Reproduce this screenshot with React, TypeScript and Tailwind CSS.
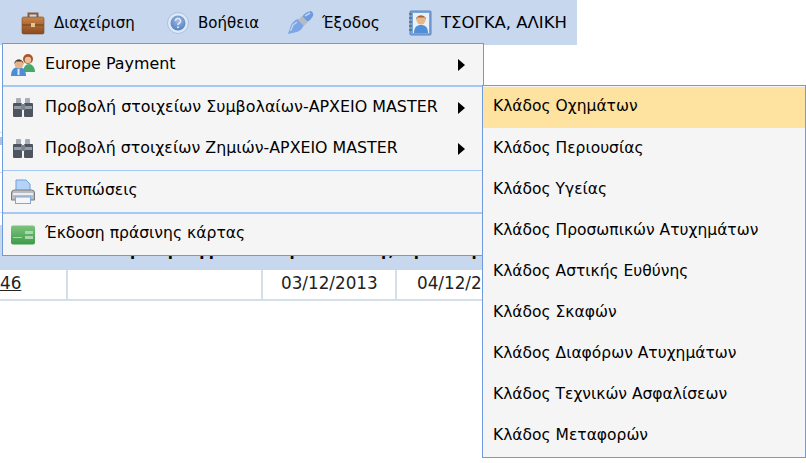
import React from "react";

const Briefcase = () => (
  <svg width="24" height="24" viewBox="0 0 24 24">
    <defs>
      <linearGradient id="bc" x1="0" y1="0" x2="0" y2="1">
        <stop offset="0" stopColor="#c98448" />
        <stop offset="1" stopColor="#8a4a20" />
      </linearGradient>
    </defs>
    <path d="M7.500 6V2.500h9V6" fill="none" stroke="#8a5a34" strokeWidth="2" />
    <rect x="1" y="6" width="22" height="17" rx="1.500" fill="url(#bc)" stroke="#7d4a24" strokeWidth=".6" />
    <rect x="1.500" y="13.500" width="21" height="1" fill="#6f3c1a" />
    <rect x="10" y="12" width="4" height="4" fill="#e8c48a" />
  </svg>
);

const Help = () => (
  <svg width="22" height="22" viewBox="0 0 22 22">
    <defs>
      <radialGradient id="h" cx="0.5" cy="0.35" r="0.7">
        <stop offset="0" stopColor="#9dbbe4" />
        <stop offset="1" stopColor="#4f7cc0" />
      </radialGradient>
    </defs>
    <circle cx="11" cy="11" r="10.500" fill="#dfe9f6" stroke="#a9c0e2" />
    <circle cx="11" cy="11" r="7.500" fill="url(#h)" />
    <path d="M8.500 9a2.500 2.500 0 1 1 3.500 2.300c-.7.400-1 .8-1 1.700" fill="none" stroke="#dfe9f6" strokeWidth="1.600" />
    <circle cx="11" cy="15.300" r="1" fill="#dfe9f6" />
  </svg>
);

const Plug = () => (
  <svg width="26" height="26" viewBox="0 0 26 26">
    <path d="M0 24 L3 15 Q6 10 10 9 L16 15 Q14 20 9 22 Z" fill="#7ba5e4" />
    <path d="M14 7 Q17 2 23 1 Q26 3 25 6 Q23 10 19 12 Z" fill="#6f9bdc" />
    <path d="M10 10 L14 6 L20 12 L16 16 Z" fill="#b6bcc6" />
    <path d="M2.500 21 L5 15 L9 12" fill="none" stroke="#bcd4f5" strokeWidth="1.500" />
    <path d="M17 6 L22 3" fill="none" stroke="#bcd4f5" strokeWidth="1.500" />
  </svg>
);

const Contact = () => (
  <svg width="24" height="26" viewBox="0 0 24 26">
    <rect x="2" y="1" width="21" height="24" rx="1" fill="#7ba6dc" stroke="#5c85bd" />
    <rect x="5" y="3" width="16" height="20" fill="#eaf0f8" />
    <circle cx="13" cy="10" r="4.500" fill="#e8b68c" />
    <path d="M8 10c-1-6 11-6 10 0l-1-2.500h-8z" fill="#a4622c" />
    <path d="M6 23c0-6 3-8 7-8s7 2 7 8z" fill="#4f8fd8" />
    <path d="M1 4h3M1 8h3M1 12h3M1 16h3M1 20h3" stroke="#6b6b6b" strokeWidth="1.500" />
  </svg>
);

const People = () => (
  <svg width="26" height="26" viewBox="0 0 26 26">
    <path d="M13 20c0-5 3-8 6-8s6 3 6 8z" fill="#46a86a" />
    <circle cx="18" cy="7" r="5" fill="#a8562c" />
    <circle cx="18" cy="8" r="3.200" fill="#eabf9a" />
    <path d="M1 24c0-6 3-9 7.500-9s7.500 3 7.500 9z" fill="#4d8dd6" />
    <circle cx="9" cy="12" r="4.500" fill="#e5b48c" />
    <path d="M4.500 12c-.5-6 9-6 9 0l-1.500-2.500H6z" fill="#4a3a2c" />
    <rect x="7.500" y="17" width="2" height="6" fill="#dfe9f6" />
  </svg>
);

const Binoculars = () => (
  <svg width="22" height="22" viewBox="0 0 22 22">
    <rect x="4" y="1" width="5" height="6" rx="1" fill="#a7adb6" />
    <rect x="13" y="1" width="5" height="6" rx="1" fill="#a7adb6" />
    <rect x="1" y="6" width="9" height="14" rx="1" fill="#4d5560" />
    <rect x="12" y="6" width="9" height="14" rx="1" fill="#4d5560" />
    <rect x="9" y="7" width="4" height="6" fill="#7b838e" />
    <rect x="2" y="9" width="7" height="3" fill="#949ca6" />
    <rect x="13" y="9" width="7" height="3" fill="#949ca6" />
  </svg>
);

const Printer = () => (
  <svg width="26" height="26" viewBox="0 0 26 26">
    <path d="M6 1h10l4 4v9H6z" fill="#b5d3f6" stroke="#6f9fdc" />
    <path d="M1.500 14q0-3 3-3h17q3 0 3 3v7h-23z" fill="#b9bcc2" stroke="#777a80" />
    <rect x="5.500" y="18" width="15" height="6.500" fill="#f4f6f9" stroke="#7fa7dc" />
    <rect x="3" y="14" width="20" height="2" fill="#eceded" />
  </svg>
);

const Card = () => (
  <svg width="26" height="22" viewBox="0 0 26 22">
    <defs>
      <linearGradient id="cg" x1="0" y1="0" x2="0" y2="1">
        <stop offset="0" stopColor="#7cc47e" />
        <stop offset="1" stopColor="#3f9a48" />
      </linearGradient>
    </defs>
    <rect x="1" y="1.500" width="24" height="19" rx="2" fill="url(#cg)" />
    <rect x="15" y="7" width="8" height="3" fill="#a8d8ab" />
    <rect x="15" y="12" width="8" height="3" fill="#a8d8ab" />
    <rect x="3" y="13" width="9" height="1" fill="#a8d8ab" />
  </svg>
);

const Arrow = () => <div className="h-0 w-0 border-y-[6px] border-l-[7px] border-y-transparent border-l-black" />;

const Top = ({ icon, label, w, gap, size }: { icon: React.ReactNode; label: string; w: string; gap: string; size: string }) => (
  <div className={`flex items-center ${w} ${gap} ${size}`}>
    {icon}
    <span className="pt-[2px]">{label}</span>
  </div>
);

const Item = ({ icon, label, arrow, h = "h-[41px]", size = "text-[15.600px]" }: { icon: React.ReactNode; label: string; arrow?: boolean; h?: string; size?: string }) => (
  <div className={`flex items-center pl-[7px] pr-[18px] ${h}`}>
    <div className="flex w-[26px] justify-center">{icon}</div>
    <span className={`ml-[9px] flex-1 pb-[2px] ${size}`}>{label}</span>
    {arrow && <Arrow />}
  </div>
);

const sub = [
  "Κλάδος Οχημάτων",
  "Κλάδος Περιουσίας",
  "Κλάδος Υγείας",
  "Κλάδος Προσωπικών Ατυχημάτων",
  "Κλάδος Αστικής Ευθύνης",
  "Κλάδος Σκαφών",
  "Κλάδος Διαφόρων Ατυχημάτων",
  "Κλάδος Τεχνικών Ασφαλίσεων",
  "Κλάδος Μεταφορών",
];

export default function App() {
  return (
    <div className="relative h-[463px] w-[806px] overflow-hidden bg-white font-['DejaVu_Sans',sans-serif] text-[15px] text-black">
      <div className="flex h-[45px] w-[577px] items-center bg-[#c6d7ee] pl-[21px]">
        <Top w="w-[146px]" gap="gap-[9px]" size="text-[15px]" icon={<Briefcase />} label="Διαχείριση" />
        <Top w="w-[121px]" gap="gap-[9px]" size="text-[15px]" icon={<Help />} label="Βοήθεια" />
        <Top w="w-[120px]" gap="gap-[8px]" size="text-[15.500px]" icon={<Plug />} label="Έξοδος" />
        <Top w="w-auto" gap="gap-[9px]" size="text-[16.500px]" icon={<Contact />} label="ΤΣΟΓΚΑ, ΑΛΙΚΗ" />
      </div>

      <div className="flex h-[180px] w-[2px] flex-col">
        <div className="mt-[87px] h-px bg-[#d5deeb]" />
        <div className="mt-[4px] h-[8px] bg-[#a5c4ea]" />
        <div className="mt-[27px] h-px bg-[#d5deeb]" />
        <div className="mt-[39px] h-px bg-[#d5deeb]" />
      </div>

      <div className="flex h-[45px] bg-[#c6d7ee] pt-[17px] text-[15px] font-bold leading-[18px]">
        <span className="ml-[130px]">ρ</span>
        <span className="ml-[27px]">ρ</span>
        <span className="ml-[18px]">γ</span>
        <span className="ml-[2px]">ρ</span>
        <span className="ml-[70px]">ρ</span>
        <span className="ml-[78px]">γ,</span>
        <span className="ml-[8px]">Αρ. Εταιρ</span>
      </div>
      <div className="flex h-[31px] border-b-2 border-[#d5deeb] text-[16.800px] text-[#222]">
        <div className="w-[68px] border-r-2 border-[#d5deeb] pt-[1px] underline">46</div>
        <div className="w-[195px] border-r-2 border-[#d5deeb]" />
        <div className="w-[134px] border-r-2 border-[#d5deeb] pl-[18px] pt-[1px]">03/12/2013</div>
        <div className="pl-[20px] pt-[1px]">04/12/2013</div>
      </div>

      <div className="absolute left-[2px] top-[43px] flex w-[482px] flex-col border border-[#6f9bdc] bg-[#f5f5f5]">
        <Item icon={<People />} label="Europe Payment" arrow size="text-[15.900px]" />
        <div className="h-[2px] bg-[#a5c8f5]" />
        <Item icon={<Binoculars />} label="Προβολή στοιχείων Συμβολαίων-ΑΡΧΕΙΟ MASTER" arrow size="text-[15.900px]" />
        <Item icon={<Binoculars />} label="Προβολή στοιχείων Ζημιών-ΑΡΧΕΙΟ MASTER" arrow h="h-[42px]" size="text-[15.800px]" />
        <div className="h-px bg-[#a5c8f5]" />
        <Item icon={<Printer />} label="Εκτυπώσεις" />
        <div className="h-[2px] bg-[#a5c8f5]" />
        <Item icon={<Card />} label="Έκδοση πράσινης κάρτας" />
      </div>

      <div className="absolute left-[482px] top-[85px] flex h-[373px] w-[324px] flex-col border border-[#6f9bdc] bg-[#f5f5f5] pt-px text-[15.500px]">
        {sub.map((s, i) => (
          <div key={s} className={`flex flex-1 items-center pb-px pl-[10px] ${i === 0 ? "bg-[#fee29f]" : ""}`}>
            {s}
          </div>
        ))}
      </div>
    </div>
  );
}
